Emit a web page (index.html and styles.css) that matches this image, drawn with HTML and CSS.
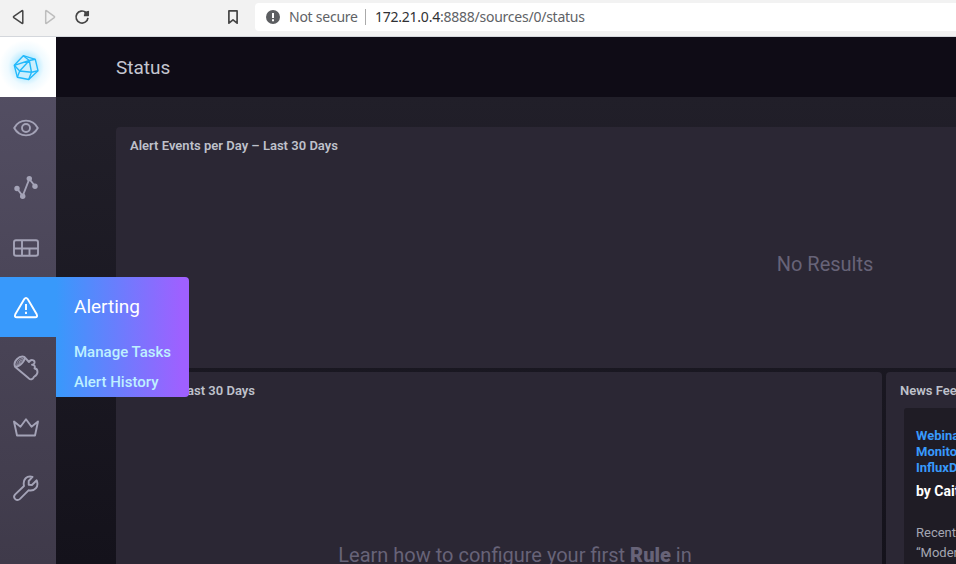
FILE: index.html
```html
<!DOCTYPE html>
<html lang="en">
<head>
<meta charset="utf-8">
<title>Status</title>
<link rel="stylesheet" href="styles.css">
</head>
<body>
<header class="browser">
  <svg class="browser-icons" width="255" height="36" viewBox="0 0 255 36" fill="none" stroke="#454545" stroke-width="1.5" stroke-linejoin="round">
    <path d="M22.8 11v12q0 .7-.7.3l-8.3-5.7q-.7-.6 0-1.200l8.300-5.700q.7-.4.7.3z"/>
    <path stroke="#bdbdbd" d="M45.700 11v12q0 .7.7.3l7.800-5.700q.7-.6 0-1.200l-7.800-5.700q-.7-.4-.7.3z"/>
    <path stroke-width="1.700" d="M86 12.500a6 6 0 1 0 2 5.300M88.200 11v4.300h-4.300"/>
    <path fill="#454545" stroke="none" d="M89 10.800v4.700h-4.700V12z"/>
    <path stroke-width="1.700" d="M228.900 10.900h8.200v12.300l-4.100-3.400-4.100 3.400z"/>
  </svg>
  <div class="address">
    <svg width="14" height="14" viewBox="0 0 14 14"><circle cx="7" cy="7" r="7" fill="#5c5e61"/><path stroke="#fff" stroke-width="2" d="M7 3v5M7 9.300v2"/></svg>
    <span class="insecure">Not secure</span>
    <span class="divider"></span>
    <span class="url"><b>172.21.0.4</b>:8888/sources/0/status</span>
  </div>
</header>
<div class="app">
  <nav class="sidebar">
    <a class="logo">
      <svg width="28" height="28" viewBox="0 0 28 28" fill="none" stroke="#22b9fb" stroke-width="1.400" stroke-linejoin="round"><path fill="#cceffd" d="M11.300 2.700 23.300 6.300 26 17.700 16.700 26.500 5.300 24.200 2.300 12.300z"/><path d="M11.300 2.700 17.300 7.500 23.300 6.300M17.300 7.500 7.700 18 19.500 19.300zM2.300 12.300 17.300 7.500M2.300 12.300 7.700 18 5.300 24.200M26 17.700l-6.500 1.600-2.800 7.200"/></svg>
    </a>
    <a class="item"><svg class="icon" viewBox="0 0 28 28"><path d="M2.200 14C7.500 4.200 20.500 4.200 25.800 14 20.500 23.800 7.500 23.800 2.200 14z"/><circle cx="14" cy="14" r="4"/></svg></a>
    <a class="item"><svg class="icon" viewBox="0 0 28 28"><path d="m5 14.500 5.700 7.500L17.300 5l5.700 7"/><g class="solid"><circle cx="5" cy="14.500" r="2.700"/><circle cx="10.700" cy="22.300" r="2.700"/><circle cx="17.300" cy="4.600" r="2.700"/><circle cx="23" cy="12.200" r="2.700"/></g></svg></a>
    <a class="item"><svg class="icon" viewBox="0 0 28 28"><rect x="2" y="6.200" width="24" height="15.600" rx="2"/><path d="M2 14.500h24M10 6.200v15.600M17.500 14.500v7.300"/></svg></a>
    <div class="item active">
      <svg class="icon" viewBox="0 0 28 28"><path d="M12.300 5.100q1.700-2.500 3.400 0l9 15.200q1.300 3-1.500 3H4.800q-2.800 0-1.500-3z"/><path d="M14 10v6M14 17.700v2.300"/></svg>
      <div class="menu">
        <h2>Alerting</h2>
        <a>Manage Tasks</a>
        <a>Alert History</a>
      </div>
    </div>
    <a class="item"><svg class="icon" viewBox="0 0 28 28"><path d="M3 12.700C1 7.500 7 1.300 12.300 2.800L17 8c2-3.300 6-2 5.500 1-.3 1-1.500 1.800-2.500 1.700 2.500-.1 3.500 1.800 2.500 3.800 2.200 0 3 1.500 3 3.500 0 3-2.800 4.400-3.500 4.800-1.200 2.700-3.500 3.300-5.300 1.500zM12.300 2.800c1.500 3.500-4.300 10-9.300 9.900"/><path class="fine" d="M5 11C4.500 7.500 8 4.300 11 4.700M7 9.500c0-2 1-3 2.700-3.300M5.500 11.200l5.800-6"/></svg></a>
    <a class="item"><svg class="icon" viewBox="0 0 28 28"><path d="m2 7.500 3 14h18l3-14-6.500 5.200L14 5.300l-5.500 7.400z"/></svg></a>
    <a class="item"><svg class="icon" viewBox="0 0 28 28"><path d="M3.200 20.400 12 12C10.500 5 15 1.500 20.500 2.900L16.700 7v3.800l3.200.2 4.800-4.700c2.400 6.400-1.700 11.300-8.200 10L8 24.900c-3.200 3-7.900-1-4.800-4.500z"/></svg></a>
  </nav>
  <main class="page">
    <h1 class="page-title">Status</h1>
    <div class="dashboard">
      <section class="panel wide">
        <h3>Alert Events per Day – Last 30 Days</h3>
        <p class="empty">No Results</p>
      </section>
      <section class="panel">
        <h3>Alerts – Last 30 Days</h3>
        <p class="empty hint">Learn how to configure your first <b>Rule</b> in</p>
      </section>
      <section class="panel">
        <h3>News Feed</h3>
        <article class="news">
          <h4>Webinar:<br>Monitoring<br>InfluxData</h4>
          <h5>by Caitlin</h5>
          <p>Recently<br>“Modern</p>
        </article>
      </section>
    </div>
  </main>
</div>
</body>
</html>
```
FILE: styles.css
```css
* { box-sizing: border-box; }
html, body { height: 100%; overflow: hidden; }
body { margin: 0; font-family: Roboto, sans-serif; background: #1c1a23; }
h1, h2, h3, h4, h5, p { margin: 0; }
svg { display: block; flex: none; }

.browser { display: flex; height: 37px; background: #f2f2f2; border-bottom: 1px solid #d4d7dc; }
.address {
  display: flex; align-items: center; flex: 1; height: 28px; margin-top: 3px; padding-left: 11px;
  background: #fff; border-radius: 4px 0 0 4px; color: #606266;
  font: 14px "Noto Sans", sans-serif; white-space: nowrap;
}
.insecure, .url { padding-bottom: 2px; }
.insecure { margin-left: 9px; width: 68px; letter-spacing: -.25px; }
.divider { width: 1px; height: 16px; margin: 0 9px 0 8px; background: #aaa; }
.url { letter-spacing: -.24px; }
.url b { font-weight: 400; color: #303134; }

.app { display: flex; height: 527px; }
.sidebar { width: 56px; flex: none; background: linear-gradient(#555065, #3f3a4a); position: relative; z-index: 1; }
.logo, .item { display: flex; align-items: center; height: 60px; padding-left: 12px; }
.logo { background: radial-gradient(circle at 26px 30px, #8edfff 0, #b9ebff 10px, #effaff 18px, #fff 27px); }
.item { position: relative; color: #a4a3b7; }
.icon { width: 28px; height: 28px; margin-top: 1px; fill: none; stroke: currentColor; stroke-width: 1.9; stroke-linejoin: round; }
.icon .solid { fill: currentColor; stroke: none; }
.icon .fine { stroke-width: .9; }
.active { background: #3899fb; color: #fff; }
.menu {
  position: absolute; left: 56px; top: 0; width: 133px; height: 120px; padding-left: 18px;
  background: linear-gradient(90deg, #3899fb, #9f60ff 95%); border-radius: 0 4px 4px 0; white-space: nowrap;
}
.menu h2 { font-size: 19px; font-weight: 400; line-height: 60px; }
.menu a { display: block; color: #bef0ff; font-size: 15px; font-weight: 500; line-height: 30px; }

.page { flex: 1; min-width: 0; overflow: hidden; background: linear-gradient(#211f29 60px, #14121b); }
.page-title { height: 60px; padding-left: 60px; background: #0f0c16; color: #c4c6d0; font-size: 19px; font-weight: 400; line-height: 61px; }
.dashboard { display: grid; grid-template-columns: 766px 648px; grid-template-rows: 241px 360px; gap: 4px; padding: 30px 60px; width: 1538px; }
.panel { display: flex; flex-direction: column; background: #2b2734; border-radius: 4px; padding: 0 14px; }
.wide { grid-column: 1 / -1; }
.panel h3 { height: 36px; color: #bfc1cb; font-size: 13px; font-weight: 600; line-height: 37px; letter-spacing: .015px; }
.empty { flex: 1; display: flex; align-items: center; justify-content: center; color: #676378; font-size: 20px; white-space: pre; padding-bottom: 3px; }
.hint { align-items: flex-start; padding: 135px 0 0 32px; }
.hint b { font-weight: 900; }
.news { flex: 1; margin-left: 4px; padding: 20px 12px; background: #1f1c25; border-radius: 3px; color: #a4a6b2; }
.news h4 { color: #3899fb; font-size: 13px; font-weight: 700; line-height: 16px; }
.news h5 { margin: 6px 0 23px; color: #fff; font-size: 14px; font-weight: 700; line-height: 18px; }
.news p { font-size: 13px; line-height: 20px; }
```
